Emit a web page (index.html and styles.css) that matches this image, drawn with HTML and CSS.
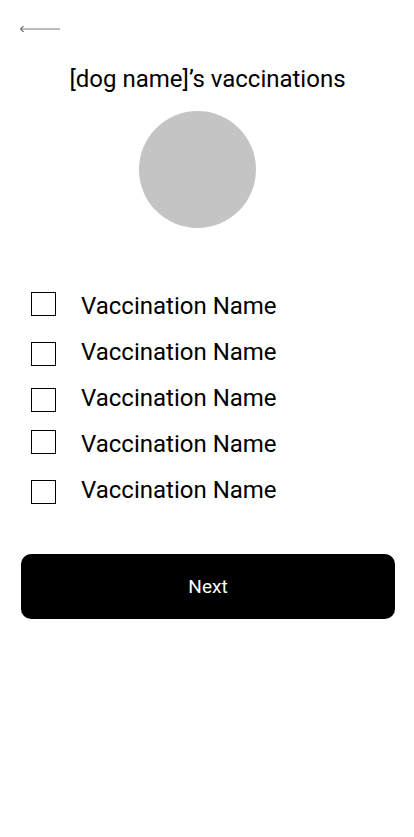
FILE: index.html
```html
<!DOCTYPE html>
<html lang="en">
<head>
<meta charset="utf-8">
<title>Vaccinations</title>
<link rel="stylesheet" href="styles.css">
</head>
<body>
<main class="page">
  <button class="back" aria-label="Back">
    <svg width="42" height="12" viewBox="0 0 42 12">
      <line x1="2" y1="6" x2="41" y2="6" stroke="#7a7a7a" stroke-width="1"/>
      <path d="M4.5 3 L1.5 6 L4.5 9" fill="none" stroke="#222" stroke-width="1"/>
    </svg>
  </button>
  <h1 class="title">[dog name]’s vaccinations</h1>
  <div class="avatar"></div>
  <ul class="list">
    <li class="row"><span class="box"></span><span class="label">Vaccination Name</span></li>
    <li class="row"><span class="box"></span><span class="label">Vaccination Name</span></li>
    <li class="row"><span class="box"></span><span class="label">Vaccination Name</span></li>
    <li class="row"><span class="box"></span><span class="label">Vaccination Name</span></li>
    <li class="row"><span class="box"></span><span class="label">Vaccination Name</span></li>
  </ul>
  <button class="next">Next</button>
</main>
</body>
</html>
```
FILE: styles.css
```css
* { box-sizing: border-box; }
html, body { margin: 0; padding: 0; background: #fff; }
body { font-family: Roboto, "Noto Sans", sans-serif; color: #000; }
.page { display: flex; flex-direction: column; width: 414px; min-height: 837px; }
.back {
  display: block; margin: 23px 0 0 19px; padding: 0; border: 0; background: none;
  width: 42px; height: 12px; cursor: pointer;
}
.back svg { display: block; }
.title {
  margin: 30px 0 0; font-size: 24px; line-height: 28px; font-weight: 400;
  text-align: center; padding-left: 1px;
}
.avatar {
  width: 117px; height: 117px; border-radius: 50%; background: #c4c4c4;
  margin: 18px 0 0 139px;
}
.list { list-style: none; margin: 55px 0 0; padding: 0; }
.row { display: flex; align-items: center; height: 46px; padding-left: 31px; }
.box { width: 25px; height: 24px; border: 1px solid #000; flex: none; }
.row:nth-child(1) .box { margin-bottom: 5px; }
.row:nth-child(2) .box { margin-top: 3px; }
.row:nth-child(3) .box { margin-top: 4px; }
.row:nth-child(4) .box { margin-bottom: 5px; }
.row:nth-child(5) .box { margin-top: 3px; }
.label { margin-left: 25px; font-size: 24px; line-height: 28px; }
.next {
  margin: 41px 19px 0 21px; height: 65px; border: 0; border-radius: 10px;
  background: #000; color: #fff; font-family: Roboto, "Noto Sans", sans-serif;
  font-size: 19px; cursor: pointer;
}
```
